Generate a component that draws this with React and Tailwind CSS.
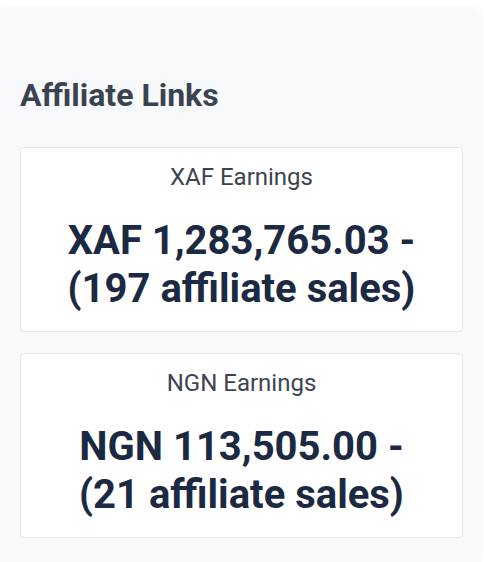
export default function App() {
    const earnings = [
        { currency: 'XAF', amount: '1,283,765.03', sales: 197 },
        { currency: 'NGN', amount: '113,505.00', sales: 21 },
    ];

    return (
        <div className="min-h-screen bg-white pt-[10px] pr-[3px]" style={{ fontFamily: 'Roboto, "Noto Sans", sans-serif' }}>
            <div className="min-h-[552px] bg-[#f8f9fb] rounded-tr-lg shadow-[0_-2px_6px_rgba(0,0,0,0.04)] pl-[20px] pr-[18px] pt-[66px] pb-6">
                <h2 className="text-[32px] leading-[38px] font-bold text-[#3a4350] mb-[33px]">Affiliate Links</h2>

                <div className="flex flex-col gap-[21px]">
                    {earnings.map((e) => (
                        <div key={e.currency} className="bg-white border border-[#e3e6ea] rounded-[4px] pt-[13px] pb-[18px] text-center">
                            <p className="text-[24px] leading-[32px] text-[#3d4450]">{e.currency} Earnings</p>
                            <p className="mt-[24px] text-[40px] leading-[48px] font-bold text-[#1b2a42] px-4">
                                {e.currency} {e.amount} -<br />({e.sales} affiliate sales)
                            </p>
                        </div>
                    ))}
                </div>
            </div>
        </div>
    );
}
